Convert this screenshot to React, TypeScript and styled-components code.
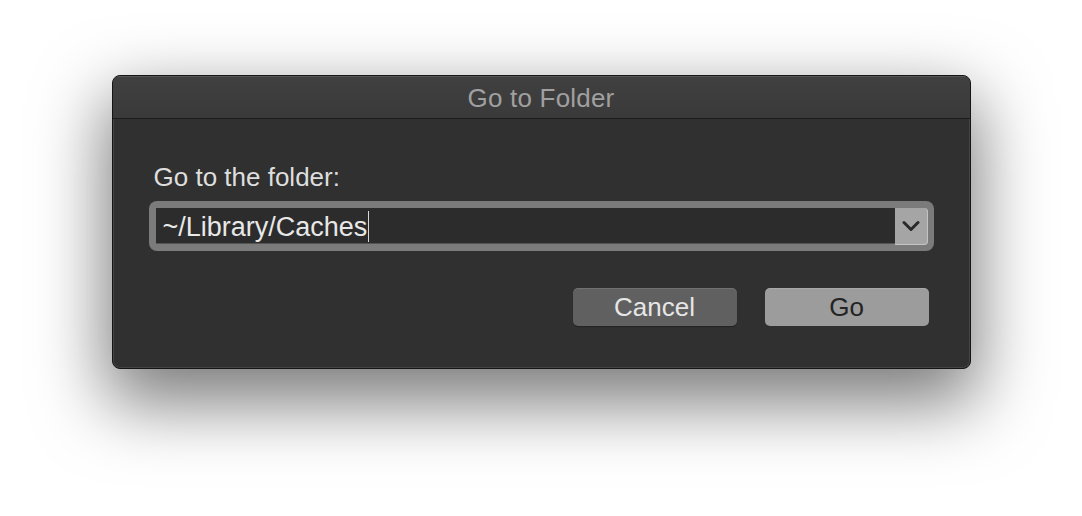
import React from "react";
import styled, { createGlobalStyle } from "styled-components";

const GlobalStyle = createGlobalStyle`
  html, body { margin: 0; padding: 0; background: #ffffff; }
  body { font-family: "Liberation Sans", Arial, sans-serif; }
`;

const Page = styled.div`
  width: 1082px;
  height: 516px;
  box-sizing: border-box;
  padding-top: 75px;
  display: flex;
  flex-direction: column;
  align-items: center;
  overflow: hidden;
  background: #ffffff;
`;

const Window = styled.div`
  width: 859px;
  box-sizing: border-box;
  border: 1px solid #151515;
  border-radius: 8px;
  background: #303030;
  overflow: hidden;
  box-shadow: 0 28px 70px 6px rgba(0, 0, 0, 0.52),
    inset 0 0 0 1px rgba(255, 255, 255, 0.1);
  display: flex;
  flex-direction: column;
`;

const TitleBar = styled.div`
  height: 43px;
  box-sizing: border-box;
  padding-top: 3px;
  display: flex;
  align-items: center;
  justify-content: center;
  background: linear-gradient(#404040, #3a3a3a);
  border-bottom: 1px solid #1c1c1c;
  box-shadow: inset 0 1px 0 rgba(255, 255, 255, 0.12);
  color: #a0a0a0;
  font-size: 26px;
  letter-spacing: 0.2px;
`;

const Body = styled.div`
  padding: 43px 36px 42px 36px;
  display: flex;
  flex-direction: column;
`;

const Label = styled.div`
  margin-left: 5px;
  height: 30px;
  line-height: 30px;
  font-size: 26px;
  color: #dedede;
`;

const Combo = styled.div`
  margin-top: 9px;
  height: 50px;
  box-sizing: border-box;
  padding: 7px 6px 6px 7px;
  border-radius: 8px;
  background: #7b7b7b;
  display: flex;
`;

const Field = styled.div`
  flex: 1;
  height: 36px;
  box-sizing: border-box;
  padding: 4px 0 0 7px;
  background: #2c2c2c;
  box-shadow: inset 0 -1px 0 #555;
  display: flex;
  align-items: flex-start;
`;

const FieldText = styled.span`
  font-size: 27px;
  line-height: 30px;
  color: #e8e8e8;
  white-space: nowrap;
`;

const Caret = styled.span`
  width: 1px;
  height: 31px;
  margin-top: -1px;
  margin-left: 1px;
  background: #d8d8d8;
`;

const DropButton = styled.div`
  width: 33px;
  height: 37px;
  box-sizing: border-box;
  background: #a5a5a5;
  border-radius: 0 4px 4px 0;
  border-right: 1px solid #c4c4c4;
  border-bottom: 1px solid #c4c4c4;
  display: flex;
  align-items: center;
  justify-content: center;
`;

const ButtonRow = styled.div`
  margin-top: 37px;
  padding-right: 5px;
  display: flex;
  justify-content: flex-end;
  gap: 28px;
`;

const Button = styled.div<{ $primary?: boolean }>`
  width: 164px;
  height: 38px;
  box-sizing: border-box;
  border-radius: 5px;
  display: flex;
  align-items: center;
  justify-content: center;
  font-size: 26px;
  background: ${(p) => (p.$primary ? "#9c9c9c" : "#606060")};
  color: ${(p) => (p.$primary ? "#242424" : "#e6e6e6")};
  box-shadow: ${(p) =>
    p.$primary
      ? "inset 0 1px 0 rgba(255,255,255,0.12)"
      : "inset 0 1px 0 rgba(255,255,255,0.1), 0 1px 1px rgba(0,0,0,0.3)"};
`;

export default function App() {
  return (
    <>
      <GlobalStyle />
      <Page>
        <Window>
          <TitleBar>Go to Folder</TitleBar>
          <Body>
            <Label>Go to the folder:</Label>
            <Combo>
              <Field>
                <FieldText>~/Library/Caches</FieldText>
                <Caret />
              </Field>
              <DropButton>
                <svg width="18" height="12" viewBox="0 0 18 12">
                  <polyline
                    points="2,2.5 9,9.5 16,2.5"
                    fill="none"
                    stroke="#2a2a2a"
                    strokeWidth="3"
                    strokeLinecap="round"
                    strokeLinejoin="round"
                  />
                </svg>
              </DropButton>
            </Combo>
            <ButtonRow>
              <Button>Cancel</Button>
              <Button $primary>Go</Button>
            </ButtonRow>
          </Body>
        </Window>
      </Page>
    </>
  );
}
